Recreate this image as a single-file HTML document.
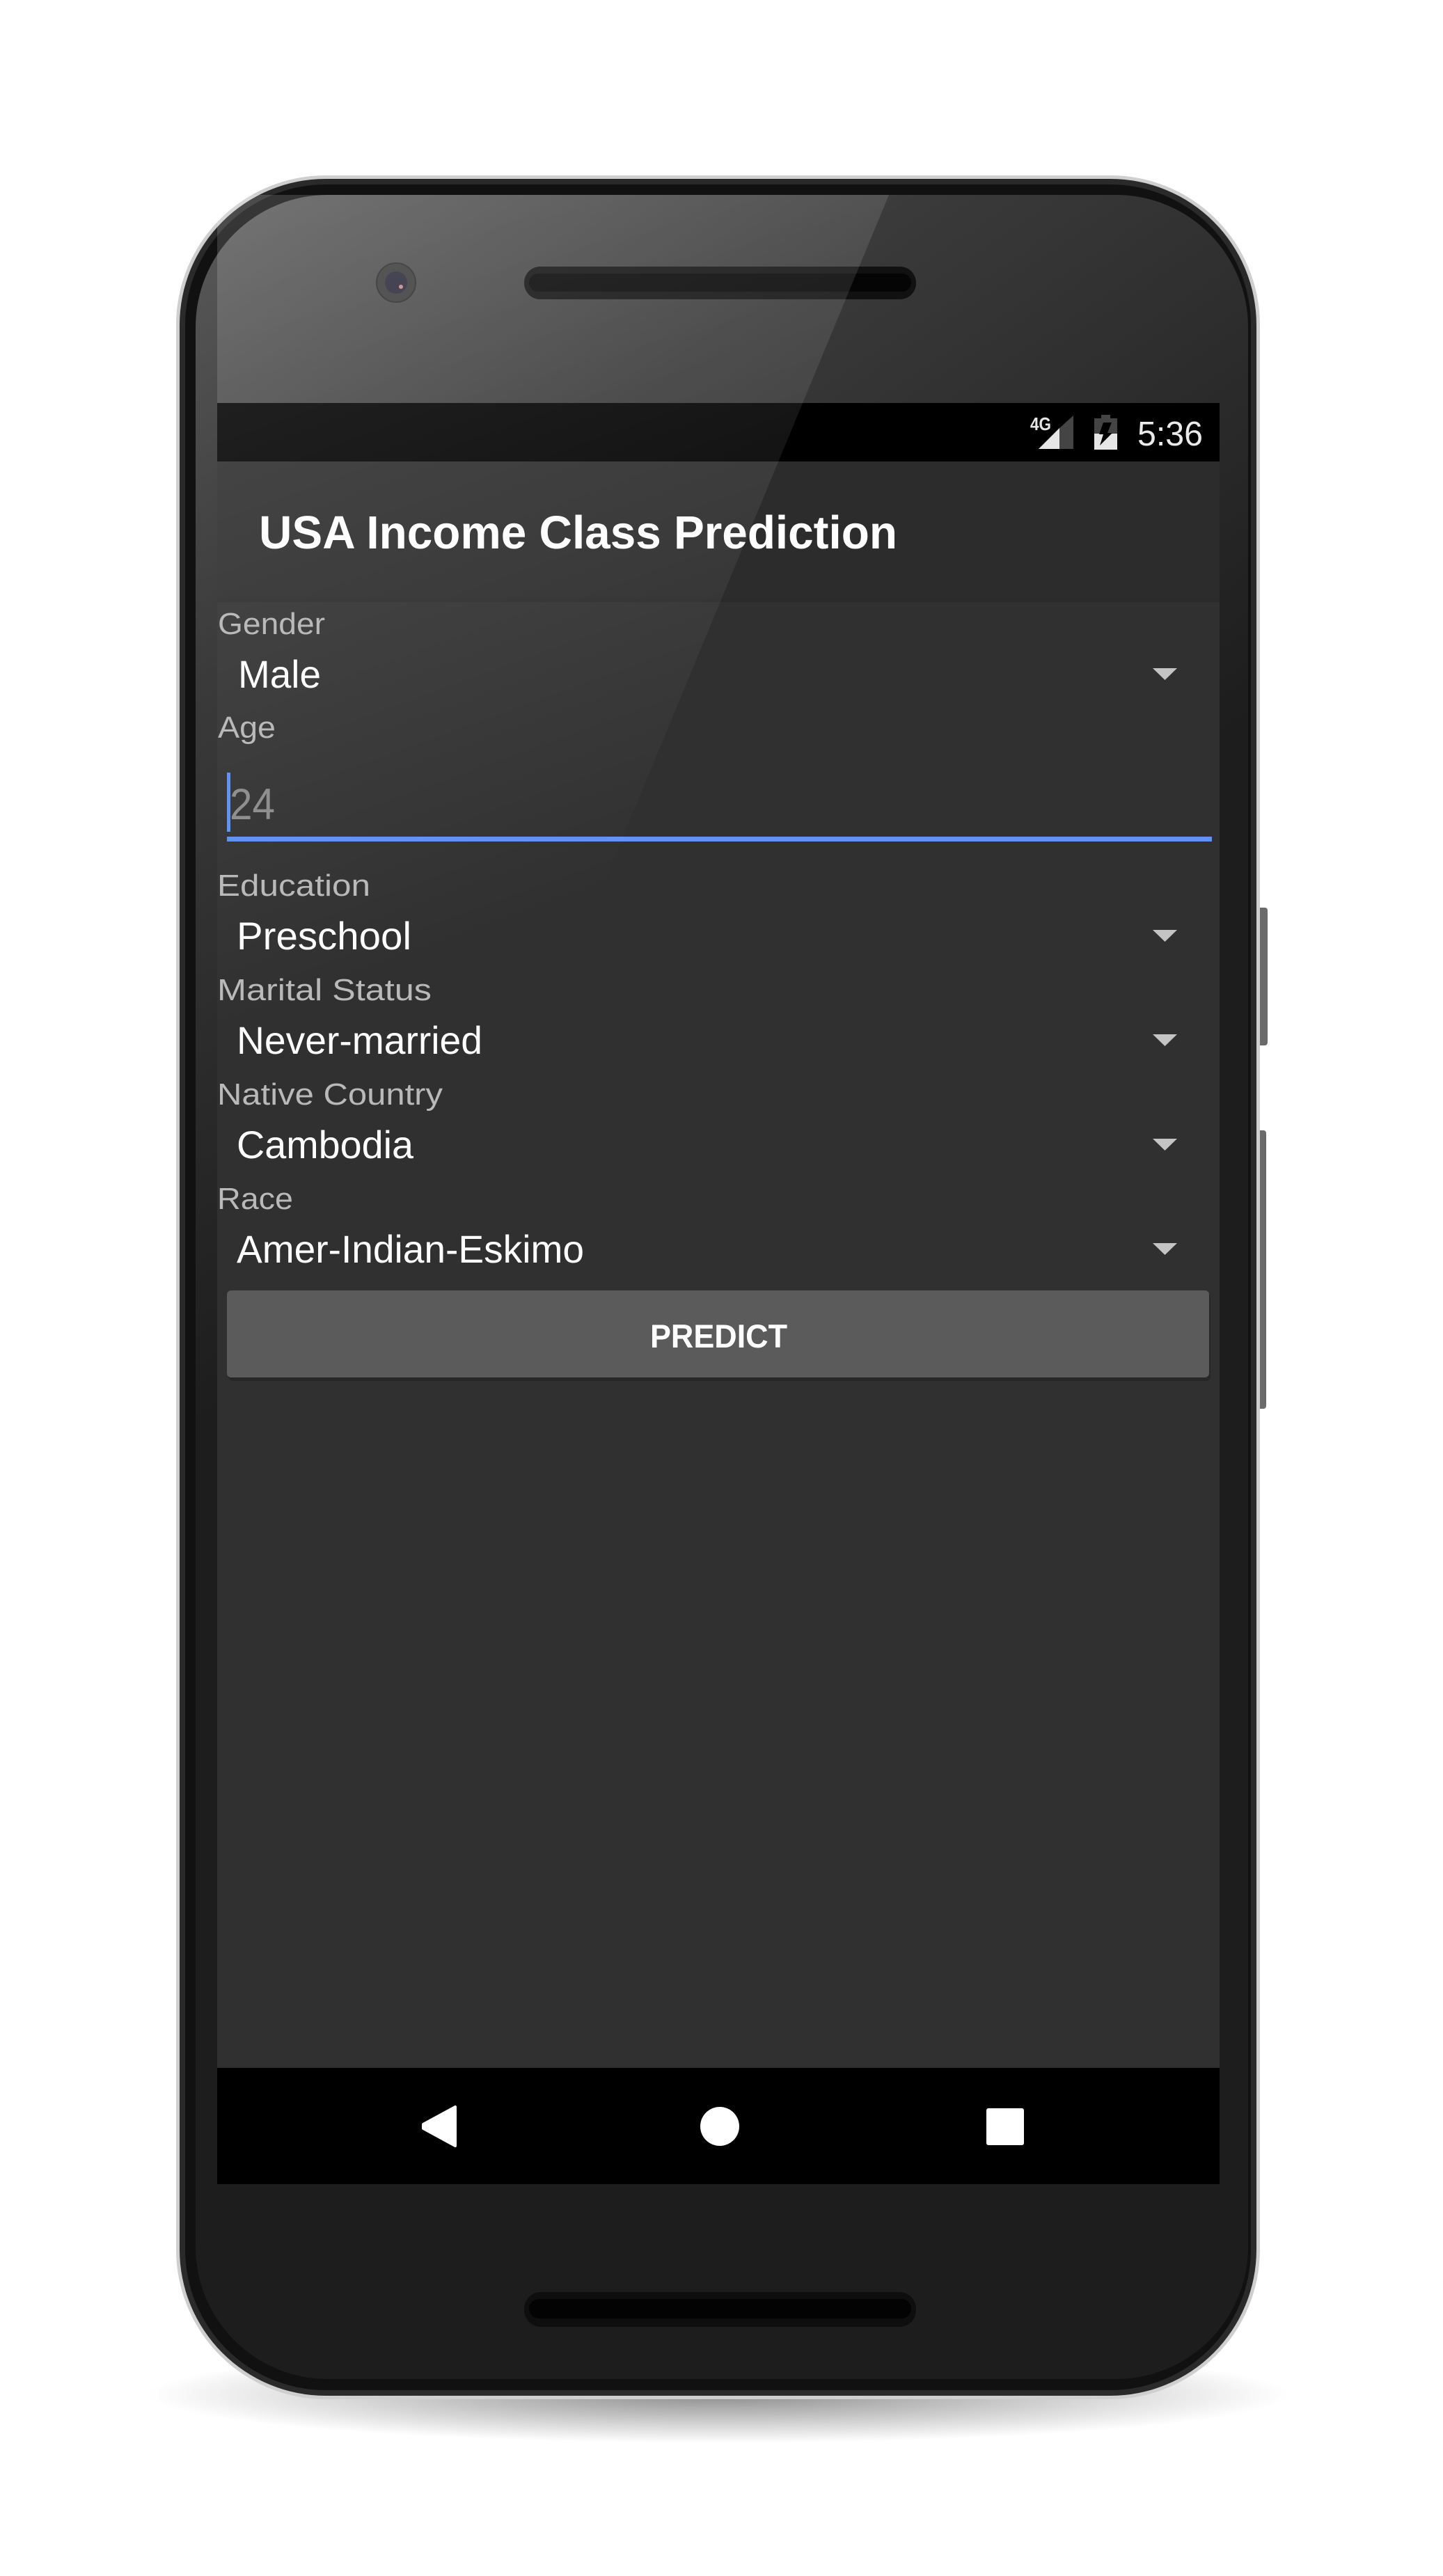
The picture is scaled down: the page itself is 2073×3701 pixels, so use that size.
<!DOCTYPE html>
<html><head><meta charset="utf-8"><style>
html,body{margin:0;padding:0;background:#fff;width:2073px;height:3701px;overflow:hidden}
svg{display:block}
text{font-family:"Liberation Sans",sans-serif}
</style></head><body>
<svg width="2073" height="3701" viewBox="0 0 2073 3701" xmlns="http://www.w3.org/2000/svg">
<defs>
<radialGradient id="sh" cx="0.5" cy="0.5" r="0.5">
<stop offset="0" stop-color="#000" stop-opacity="0.45"/>
<stop offset="1" stop-color="#000" stop-opacity="0"/>
</radialGradient>
<linearGradient id="face" gradientUnits="userSpaceOnUse" x1="281" y1="280" x2="1100" y2="1500">
<stop offset="0" stop-color="#5a5a5a"/>
<stop offset="0.4" stop-color="#3a3a3a"/>
<stop offset="1" stop-color="#1d1d1d"/>
</linearGradient>
<linearGradient id="glare" gradientUnits="userSpaceOnUse" x1="312" y1="280" x2="700" y2="1350">
<stop offset="0" stop-color="#fff" stop-opacity="0.16"/>
<stop offset="0.6" stop-color="#fff" stop-opacity="0.07"/>
<stop offset="1" stop-color="#fff" stop-opacity="0"/>
</linearGradient>
</defs>
<ellipse cx="1032" cy="3440" rx="820" ry="70" fill="url(#sh)"/>
<rect x="1806" y="1304" width="15" height="198" rx="4" fill="#6a6a6a"/>
<rect x="1806" y="1624" width="13" height="400" rx="4" fill="#6a6a6a"/>
<rect x="253" y="252" width="1557" height="3195" rx="215" ry="215" fill="#cfcfcf"/>
<rect x="258" y="257" width="1547" height="3185" rx="210" ry="210" fill="#2a2a2a"/>
<rect x="266" y="265" width="1531" height="3169" rx="202" ry="202" fill="#111"/>
<rect x="281" y="280" width="1512" height="3138" rx="190" ry="190" fill="url(#face)"/>
<circle cx="569" cy="406" r="28" fill="#3a3a3a" stroke="#2a2a2a" stroke-width="2"/>
<circle cx="569" cy="406" r="16" fill="#2a2838"/>
<circle cx="576" cy="412" r="3" fill="#c88"/>
<rect x="753" y="383" width="563" height="47" rx="23" fill="#111"/>
<rect x="760" y="393" width="549" height="26" rx="13" fill="#050505"/>
<rect x="753" y="3293" width="563" height="50" rx="24" fill="#0e0e0e"/>
<rect x="760" y="3303" width="549" height="28" rx="14" fill="#030303"/>
<rect x="312" y="579" width="1440" height="84" fill="#000"/>
<rect x="312" y="663" width="1440" height="196" fill="#2c2c2c"/>
<rect x="312" y="859" width="1440" height="2112" fill="#303030"/>
<rect x="312" y="859" width="1440" height="6" fill="#262626" opacity="0.6"/>
<rect x="312" y="2971" width="1440" height="167" fill="#000"/>
<polygon points="312,280 1277,280 730,1600 312,1600" fill="url(#glare)"/>
<text x="1480" y="618" font-size="26" font-weight="bold" fill="#e6e6e6" textLength="30" lengthAdjust="spacingAndGlyphs">4G</text>
<polygon points="1492,645 1522,645 1522,615" fill="#e6e6e6"/>
<polygon points="1522,645 1542,645 1542,597 1522,615" fill="#444"/>
<rect x="1582" y="596" width="13" height="6" fill="#444"/>
<rect x="1572" y="601" width="33" height="22" fill="#444"/>
<rect x="1572" y="623" width="33" height="23" fill="#e6e6e6"/>
<polygon points="1585,607 1597,607 1591,622 1598,622 1580,640 1585,624 1579,624" fill="#000"/>
<text x="1634" y="640" font-size="49" fill="#eaeaea" textLength="94" lengthAdjust="spacingAndGlyphs">5:36</text>
<text x="372" y="788" font-size="67" font-weight="bold" fill="#fff" textLength="917" lengthAdjust="spacingAndGlyphs">USA Income Class Prediction</text>
<g fill="#b9b9b9" font-size="44">
<text x="313" y="911" textLength="154" lengthAdjust="spacingAndGlyphs">Gender</text>
<text x="313" y="1060" textLength="83" lengthAdjust="spacingAndGlyphs">Age</text>
<text x="312" y="1287" textLength="220" lengthAdjust="spacingAndGlyphs">Education</text>
<text x="312" y="1437" textLength="308" lengthAdjust="spacingAndGlyphs">Marital Status</text>
<text x="312" y="1587" textLength="324" lengthAdjust="spacingAndGlyphs">Native Country</text>
<text x="312" y="1737" textLength="109" lengthAdjust="spacingAndGlyphs">Race</text>
</g>
<g fill="#fff" font-size="56">
<text x="342" y="988" textLength="119" lengthAdjust="spacingAndGlyphs">Male</text>
<text x="340" y="1364" textLength="251" lengthAdjust="spacingAndGlyphs">Preschool</text>
<text x="340" y="1514" textLength="353" lengthAdjust="spacingAndGlyphs">Never-married</text>
<text x="340" y="1664" textLength="254" lengthAdjust="spacingAndGlyphs">Cambodia</text>
<text x="340" y="1814" textLength="499" lengthAdjust="spacingAndGlyphs">Amer-Indian-Eskimo</text>
</g>
<g fill="#c4c4c4">
<polygon points="1656,960 1691,960 1673.5,977"/>
<polygon points="1656,1336 1691,1336 1673.5,1353"/>
<polygon points="1656,1486 1691,1486 1673.5,1503"/>
<polygon points="1656,1636 1691,1636 1673.5,1653"/>
<polygon points="1656,1786 1691,1786 1673.5,1803"/>
</g>
<text x="330" y="1177" font-size="63" fill="#8f8f8f" textLength="65" lengthAdjust="spacingAndGlyphs">24</text>
<rect x="326" y="1110" width="5" height="85" fill="#5f94f2"/>
<rect x="326" y="1202" width="1415" height="7" fill="#5f94f2"/>
<rect x="328" y="1858" width="1411" height="126" rx="6" fill="#222" opacity="0.6"/>
<rect x="326" y="1854" width="1411" height="125" rx="6" fill="#5b5b5c"/>
<text x="934" y="1936" font-size="47" font-weight="bold" fill="#fff" textLength="197" lengthAdjust="spacingAndGlyphs">PREDICT</text>
<polygon points="654,3027 654,3083 608,3058 608,3052" fill="#fff" stroke="#fff" stroke-width="4" stroke-linejoin="round"/>
<circle cx="1034" cy="3055" r="28" fill="#fff"/>
<rect x="1417" y="3029" width="54" height="53" rx="3" fill="#fff"/>
</svg>
</body></html>
